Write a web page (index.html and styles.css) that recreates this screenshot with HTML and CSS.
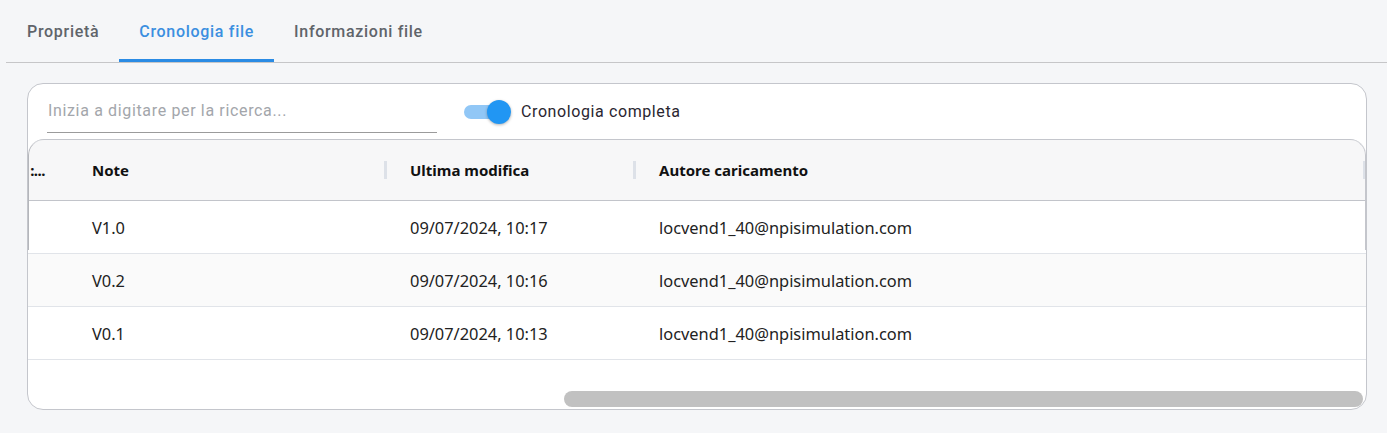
FILE: index.html
```html
<!DOCTYPE html>
<html lang="it">
<head>
<meta charset="utf-8">
<title>Cronologia file</title>
<link rel="stylesheet" href="styles.css">
</head>
<body>
  <nav class="tabs">
    <div class="tab">Proprietà</div>
    <div class="tab tab-active">Cronologia file</div>
    <div class="tab">Informazioni file</div>
  </nav>

  <section class="card">
    <div class="toolbar">
      <div class="search">
        <input class="search-input" type="text" placeholder="Inizia a digitare per la ricerca...">
      </div>
      <label class="switch">
        <span class="switch-track"><span class="switch-knob"></span></span>
        <span class="switch-label">Cronologia completa</span>
      </label>
    </div>

    <div class="grid-wrap">
      <div class="grid">
        <div class="grid-row grid-head">
          <div class="cell col-cut"><span class="cut-text">:...</span></div>
          <div class="cell col-note">Note<span class="sep"></span></div>
          <div class="cell col-date">Ultima modifica<span class="sep"></span></div>
          <div class="cell col-author">Autore caricamento<span class="sep"></span></div>
        </div>
        <div class="grid-row">
          <div class="cell col-cut"></div>
          <div class="cell col-note">V1.0</div>
          <div class="cell col-date">09/07/2024, 10:17</div>
          <div class="cell col-author">locvend1_40@npisimulation.com</div>
        </div>
        <div class="grid-row row-alt">
          <div class="cell col-cut"></div>
          <div class="cell col-note">V0.2</div>
          <div class="cell col-date">09/07/2024, 10:16</div>
          <div class="cell col-author">locvend1_40@npisimulation.com</div>
        </div>
        <div class="grid-row">
          <div class="cell col-cut"></div>
          <div class="cell col-note">V0.1</div>
          <div class="cell col-date">09/07/2024, 10:13</div>
          <div class="cell col-author">locvend1_40@npisimulation.com</div>
        </div>
      </div>
      <div class="hscroll">
        <div class="hscroll-thumb"></div>
      </div>
    </div>
  </section>
</body>
</html>
```

FILE: styles.css
```css
* {
  box-sizing: border-box;
}

html, body {
  margin: 0;
  padding: 0;
}

body {
  background: #f5f6f8;
  width: 1387px;
  height: 433px;
  overflow: hidden;
  font-family: "Roboto", "Noto Sans", sans-serif;
}

/* Tabs */
.tabs {
  display: flex;
  margin-left: 6px;
  border-bottom: 1px solid #c6c6c8;
  height: 63px;
}

.tab {
  padding: 22px 20px 17px 21px;
  font-size: 16px;
  line-height: 20px;
  font-weight: 500;
  letter-spacing: 0.7px;
  color: #60646a;
  border-bottom: 3px solid transparent;
  height: 62px;
}

.tab + .tab {
  padding-left: 20px;
}

.tab-active {
  color: #3b8fe0;
  border-bottom-color: #2a8be4;
}

/* Card */
.card {
  margin: 20px 20px 0 27px;
  height: 327px;
  background: #ffffff;
  border: 1px solid #c4c6cc;
  border-radius: 16px;
  display: flex;
  flex-direction: column;
  overflow: hidden;
}

.toolbar {
  height: 55px;
  flex: none;
  display: flex;
  align-items: center;
  padding: 0 19px;
}

.search {
  width: 390px;
}

.search-input {
  display: block;
  width: 100%;
  height: 42px;
  margin-top: 1px;
  border: 0;
  border-bottom: 1px solid #9b9b9b;
  padding: 0 0 3px 1px;
  font-family: "Roboto", "Noto Sans", sans-serif;
  font-size: 16px;
  letter-spacing: 0.65px;
  color: #333;
  background: transparent;
  outline: none;
}

.search-input::placeholder {
  color: #a3a6ab;
}

.switch {
  display: flex;
  align-items: center;
  margin-left: 26px;
  gap: 13px;
}

.switch-track {
  position: relative;
  width: 44px;
  height: 14px;
  border-radius: 7px;
  background: #91c7f6;
  display: block;
  margin-left: 1px;
}

.switch-knob {
  position: absolute;
  right: -3px;
  top: -5px;
  width: 24px;
  height: 24px;
  border-radius: 50%;
  background: #2196f3;
  box-shadow: 0 1px 3px rgba(0, 0, 0, 0.3);
}

.switch-label {
  font-size: 16px;
  color: #2a2630;
  letter-spacing: 0.6px;
}

/* Grid */
.grid-wrap {
  flex: 1;
  display: flex;
  flex-direction: column;
  position: relative;
  border-top: 1px solid #c4c6cc;
  border-radius: 16px 16px 0 0;
  overflow: hidden;
}

.grid-wrap::before {
  content: "";
  position: absolute;
  left: 0;
  right: 0;
  top: -1px;
  height: 110px;
  border: 1px solid #c4c6cc;
  border-bottom: 0;
  border-left-color: #b4b6bb;
  border-radius: 16px 16px 0 0;
  pointer-events: none;
  z-index: 2;
}

.grid {
  flex: 1;
  font-family: "Noto Sans", "Segoe UI", sans-serif;
}

.grid-row {
  display: flex;
  height: 53px;
  border-bottom: 1px solid #e1e4e9;
  font-size: 16.4px;
  color: #222222;
}

.row-alt {
  background: #fafafa;
}

.grid-head {
  height: 61px;
  background: #f7f7f8;
  border-bottom: 1px solid #c2c4ca;
  font-weight: 700;
  font-size: 15px;
  color: #111111;
}

.cell {
  position: relative;
  display: flex;
  align-items: center;
  padding-left: 24px;
  white-space: nowrap;
}

.col-cut {
  width: 40px;
  padding-left: 0;
  justify-content: flex-end;
  padding-right: 23px;
}

.cut-text {
  letter-spacing: -0.5px;
}

.col-note {
  width: 318px;
}

.col-date {
  width: 249px;
}

.col-author {
  flex: 1;
}

.sep {
  position: absolute;
  right: -1px;
  top: 21px;
  width: 3px;
  height: 18px;
  background: #dde1e8;
}

.col-author .sep {
  right: 0;
}

/* Horizontal scrollbar */
.hscroll {
  height: 18px;
  flex: none;
  display: flex;
  justify-content: flex-end;
  padding: 0 3px 2px 0;
}

.hscroll-thumb {
  width: 799px;
  height: 16px;
  border-radius: 8px;
  background: #c1c1c1;
}
```
